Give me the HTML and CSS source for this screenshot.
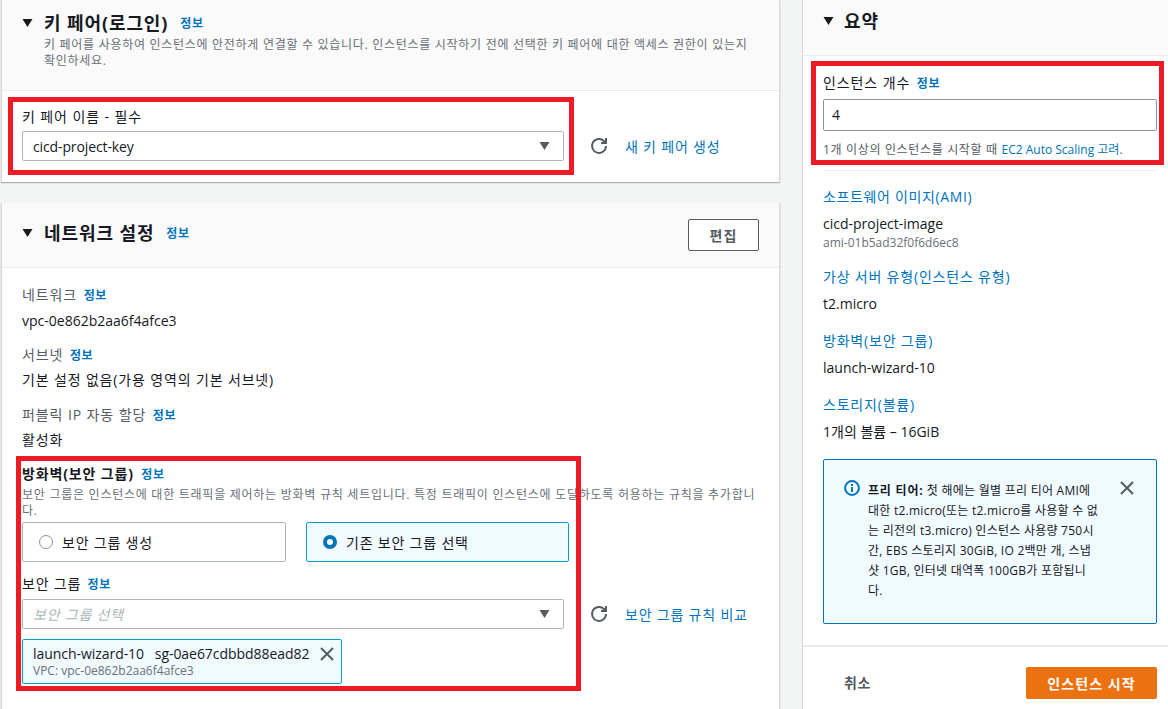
FILE: index.html
```html
<!DOCTYPE html>
<html lang="ko">
<head>
<meta charset="utf-8">
<title>인스턴스 시작</title>
<link rel="stylesheet" href="styles.css">
</head>
<body>
<div class="page">
  <main class="main">
    <section class="card key-card">
      <header class="card-head key-head">
        <div class="title-row">
          <svg class="caret" viewBox="0 0 10 8"><path d="M0 0h10L5 8z"/></svg>
          <h2>키 페어(로그인)</h2><a class="info info-h">정보</a>
        </div>
        <p class="desc key-desc">키 페어를 사용하여 인스턴스에 안전하게 연결할 수 있습니다. 인스턴스를 시작하기 전에 선택한 키 페어에 대한 액세스 권한이 있는지<br>확인하세요.</p>
      </header>
      <div class="key-body">
        <div class="label">키 페어 이름 - 필수</div>
        <div class="select-row">
          <div class="select"><span class="sel-text">cicd-project-key</span><svg class="sel-caret" viewBox="0 0 10 8"><path d="M0 0h10L5 8z"/></svg></div>
          <svg class="refresh" viewBox="0 0 16 16"><path d="M10 5h5V0"/><path d="M15 8a7 7 0 1 1-2-5l2 2"/></svg>
          <a class="link ko">새 키 페어 생성</a>
        </div>
      </div>
    </section>

    <section class="card net-card">
      <header class="card-head net-head">
        <div class="title-row">
          <svg class="caret" viewBox="0 0 10 8"><path d="M0 0h10L5 8z"/></svg>
          <h2>네트워크 설정</h2><a class="info info-h">정보</a>
        </div>
        <button class="edit">편집</button>
      </header>
      <div class="net-body">
        <div class="field"><div class="label muted-label">네트워크 <a class="info">정보</a></div><div class="value">vpc-0e862b2aa6f4afce3</div></div>
        <div class="field"><div class="label muted-label">서브넷 <a class="info">정보</a></div><div class="value value-ko">기본 설정 없음(가용 영역의 기본 서브넷)</div></div>
        <div class="field"><div class="label muted-label">퍼블릭 IP 자동 할당 <a class="info">정보</a></div><div class="value value-ko">활성화</div></div>
        <div class="fw-title">방화벽(보안 그룹) <a class="info">정보</a></div>
        <p class="desc fw-desc">보안 그룹은 인스턴스에 대한 트래픽을 제어하는 방화벽 규칙 세트입니다. 특정 트래픽이 인스턴스에 도달하도록 허용하는 규칙을 추가합니<br>다.</p>
        <div class="radios">
          <div class="radio ko"><span class="dot"></span>보안 그룹 생성</div>
          <div class="radio radio-on ko"><span class="dot dot-on"></span>기존 보안 그룹 선택</div>
        </div>
        <div class="sg-label ko">보안 그룹 <a class="info">정보</a></div>
        <div class="select-row">
          <div class="select"><em class="ko">보안 그룹 선택</em><svg class="sel-caret" viewBox="0 0 10 8"><path d="M0 0h10L5 8z"/></svg></div>
          <svg class="refresh" viewBox="0 0 16 16"><path d="M10 5h5V0"/><path d="M15 8a7 7 0 1 1-2-5l2 2"/></svg>
          <a class="link ko">보안 그룹 규칙 비교</a>
        </div>
        <div class="chip">
          <div class="chip-main">launch-wizard-10&nbsp;&nbsp;&nbsp;sg-0ae67cdbbd88ead82</div>
          <div class="chip-sub">VPC: vpc-0e862b2aa6f4afce3</div>
          <svg class="x chip-x" viewBox="0 0 14 14"><path d="M1 1l12 12M13 1L1 13"/></svg>
        </div>
      </div>
    </section>
  </main>

  <aside class="summary">
    <header class="sum-head">
      <div class="title-row">
        <svg class="caret" viewBox="0 0 10 8"><path d="M0 0h10L5 8z"/></svg>
        <h2>요약</h2>
      </div>
    </header>
    <div class="sum-body">
      <div class="count-label ko">인스턴스 개수 <a class="info">정보</a></div>
      <div class="count-input">4</div>
      <p class="count-help"><span class="help-ko">1개 이상의 인스턴스를 시작할 때 </span><a class="blue">EC2 Auto Scaling 고려</a>.</p>
      <hr class="rule">
      <a class="link sum-link first ko">소프트웨어 이미지(AMI)</a>
      <div class="value sum-val">cicd-project-image</div>
      <div class="ami">ami-01b5ad32f0f6d6ec8</div>
      <a class="link sum-link gap-s ko">가상 서버 유형(인스턴스 유형)</a>
      <div class="value sum-val">t2.micro</div>
      <a class="link sum-link gap-l ko">방화벽(보안 그룹)</a>
      <div class="value sum-val">launch-wizard-10</div>
      <a class="link sum-link gap-l ko">스토리지(볼륨)</a>
      <div class="value sum-val">1개의 볼륨 – 16GiB</div>
      <div class="alert">
        <svg class="alert-icon" viewBox="0 0 16 16"><circle cx="8" cy="8" r="6.900" fill="none" stroke="#0073bb" stroke-width="2"/><rect x="7" y="7" width="2" height="5" fill="#0073bb"/><rect x="7" y="4" width="2" height="2" fill="#0073bb"/></svg>
        <p class="alert-text"><b>프리 티어:</b> 첫 해에는 월별 프리 티어 AMI에<br>대한 t2.micro(또는 t2.micro를 사용할 수 없<br>는 리전의 t3.micro) 인스턴스 사용량 750시<br>간, EBS 스토리지 30GiB, IO 2백만 개, 스냅<br>샷 1GB, 인터넷 대역폭 100GB가 포함됩니<br>다.</p>
        <svg class="x alert-x" viewBox="0 0 14 14"><path d="M1 1l12 12M13 1L1 13"/></svg>
      </div>
    </div>
    <footer class="sum-foot">
      <a class="cancel">취소</a>
      <button class="launch">인스턴스 시작</button>
    </footer>
  </aside>

  <div class="mark mark-key"></div>
  <div class="mark mark-count"></div>
  <div class="mark mark-fw"></div>
</div>
</body>
</html>
```
FILE: styles.css
```css
* { box-sizing: border-box; }
html, body { margin: 0; padding: 0; }
body {
  font-family: "Open Sans", "Noto Sans CJK KR", sans-serif;
  font-size: 14px;
  color: #16191f;
  background: #f2f3f3;
}
.page {
  position: relative;
  width: 1168px;
  height: 709px;
  overflow: hidden;
  display: flex;
  background: #f2f3f3;
}
.ko { letter-spacing: .8px; }
.main { width: 779px; margin-left: 1px; margin-right: 22px; flex: none; }
.card {
  background: #fff;
  border-left: 1px solid #d5dbdb;
  border-right: 1px solid #d5dbdb;
  box-shadow: 0 1px 1px rgba(0, 28, 36, .3);
}
.card-head { background: #fafafa; border-bottom: 1px solid #eaeded; }
.key-head { height: 91px; padding: 12px 0 0 20px; }
.title-row { display: flex; align-items: center; height: 22px; }
.caret { width: 11px; height: 8px; fill: #16191f; flex: none; margin-right: 11px; }
h2 { margin: 0; font-size: 18px; font-weight: 700; line-height: 22px; letter-spacing: .9px; }
.info { color: #0073bb; font-size: 12px; font-weight: 700; letter-spacing: .6px; margin-left: 2px; }
.info-h { margin-left: 12px; }
.desc { margin: 0; font-size: 12px; line-height: 16px; color: #687078; letter-spacing: .71px; white-space: nowrap; }
.key-desc { margin: 3px 0 0 22px; }
.key-body { height: 91px; padding: 17px 0 0 20px; }
.label { font-size: 14px; line-height: 18px; letter-spacing: .9px; }
.select-row { display: flex; align-items: center; margin-top: 5px; }
.select {
  width: 542px; height: 30px; flex: none;
  border: 1px solid #aab7b8; border-radius: 2px;
  display: flex; align-items: center; justify-content: space-between;
  padding: 0 13px 0 10px;
  background: #fff;
}
.sel-text { letter-spacing: -.12px; }
.select em { color: #aab7b8; font-style: italic; }
.sel-caret { width: 11px; height: 8px; fill: #545b64; }
.refresh { width: 16px; height: 16px; margin: 0 18px 0 27px; flex: none; fill: none; stroke: #545b64; stroke-width: 2; overflow: visible; }
.link { color: #0073bb; font-size: 14px; }
.net-card { margin-top: 21px; height: 600px; }
.net-head { height: 65px; padding: 19px 20px 0 20px; display: flex; justify-content: space-between; align-items: flex-start; }
.edit {
  width: 71px; height: 32px; margin-top: -3px;
  background: #fff; border: 1px solid #545b64; border-radius: 2px;
  font: 700 14px "Open Sans", "Noto Sans CJK KR", sans-serif; color: #545b64;
  letter-spacing: 1px;
}
.net-body { padding: 18px 0 0 20px; }
.field { height: 60px; }
.muted-label { color: #545b64; }
.value { margin-top: 7px; font-size: 14px; line-height: 18px; }
.value-ko { margin-top: 6px; letter-spacing: .85px; }
.fw-title { font-size: 14px; font-weight: 700; line-height: 18px; margin-top: -1px; letter-spacing: .85px; }
.fw-title .info { margin-left: 3px; }
.fw-desc { margin-top: 3px; letter-spacing: .74px; }
.radios { display: flex; gap: 20px; margin-top: 3px; }
.radio {
  height: 40px; width: 264px;
  border: 1px solid #aab7b8; border-radius: 2px;
  display: flex; align-items: center; padding-left: 16px;
}
.radio-on { width: 263px; border-color: #00a1c9; background: #f1faff; }
.dot { width: 14px; height: 14px; border-radius: 50%; border: 1px solid #879596; margin-right: 9px; background: #fff; }
.dot-on { border: 4px solid #0073bb; }
.sg-label { margin-top: 13px; line-height: 18px; }
.chip {
  position: relative;
  width: 320px; height: 45px; margin-top: 10px;
  border: 1px solid #00a1c9; border-radius: 2px; background: #f1faff;
  padding: 5px 0 0 10px;
}
.chip-main { line-height: 18px; letter-spacing: -.05px; }
.chip-sub { font-size: 12px; line-height: 16px; color: #687078; }
.x { position: absolute; width: 14px; height: 14px; fill: none; stroke: #545b64; stroke-width: 2; }
.chip-x { right: 7px; top: 7px; }
.summary { flex: 1; background: #fff; border-left: 1px solid #d5dbdb; display: flex; flex-direction: column; }
.sum-head { height: 56px; background: #fafafa; border-bottom: 1px solid #eaeded; padding: 10px 0 0 20px; }
.sum-head .caret { margin-right: 10px; }
.sum-body { padding: 17px 11px 0 20px; height: 591px; flex: none; border-bottom: 2px solid #eaeded; }
.count-label { line-height: 20px; letter-spacing: .9px; }
.count-input {
  height: 32px; margin-top: 5px;
  border: 1px solid #879596; border-radius: 2px;
  padding: 0 8px; line-height: 30px;
}
.count-help { margin: 11px 0 0; font-size: 12px; line-height: 16px; color: #545b64; white-space: nowrap; }
.help-ko { letter-spacing: .66px; }
.blue { color: #0073bb; }
.rule { border: 0; border-top: 1px solid #eaeded; margin: 12px 0 0; }
.sum-link { display: block; line-height: 20px; margin-top: 17px; }
.sum-link.first { margin-top: 16px; letter-spacing: .65px; }
.sum-link.gap-s { margin-top: 16px; }
.sum-link.gap-l { margin-top: 18px; }
.sum-val { margin-top: 8px; line-height: 18px; color: #16191f; }
.ami { font-size: 12px; line-height: 16px; color: #687078; margin-top: 2px; }
.alert {
  position: relative;
  height: 165px; margin-top: 18px;
  background: #f1faff; border: 1px solid #0073bb; border-radius: 2px;
  padding: 20px 0 0 20px; display: flex;
}
.alert-icon { width: 16px; height: 16px; flex: none; margin-right: 8px; }
.alert-text { margin: 1px 0 0; font-size: 12px; line-height: 20px; letter-spacing: .25px; white-space: nowrap; }
.alert-text b { letter-spacing: .8px; }
.alert-x { right: 22px; top: 21px; }
.sum-foot { display: flex; justify-content: space-between; align-items: flex-start; padding: 20px 11px 0 41px; flex: 1; }
.cancel { font-weight: 700; color: #545b64; line-height: 31px; letter-spacing: .5px; }
.launch {
  width: 131px; height: 32px;
  background: #ec7211; border: 0; border-radius: 2px; color: #fff;
  font: 700 14px "Open Sans", "Noto Sans CJK KR", sans-serif;
  letter-spacing: 1.1px;
}
.mark { position: absolute; border: 5px solid #ed1c24; pointer-events: none; }
.mark-key { left: 8px; top: 97px; width: 566px; height: 78px; }
.mark-count { left: 811px; top: 61px; width: 353px; height: 104px; }
.mark-fw { left: 16px; top: 456px; width: 565px; height: 235px; }
```
